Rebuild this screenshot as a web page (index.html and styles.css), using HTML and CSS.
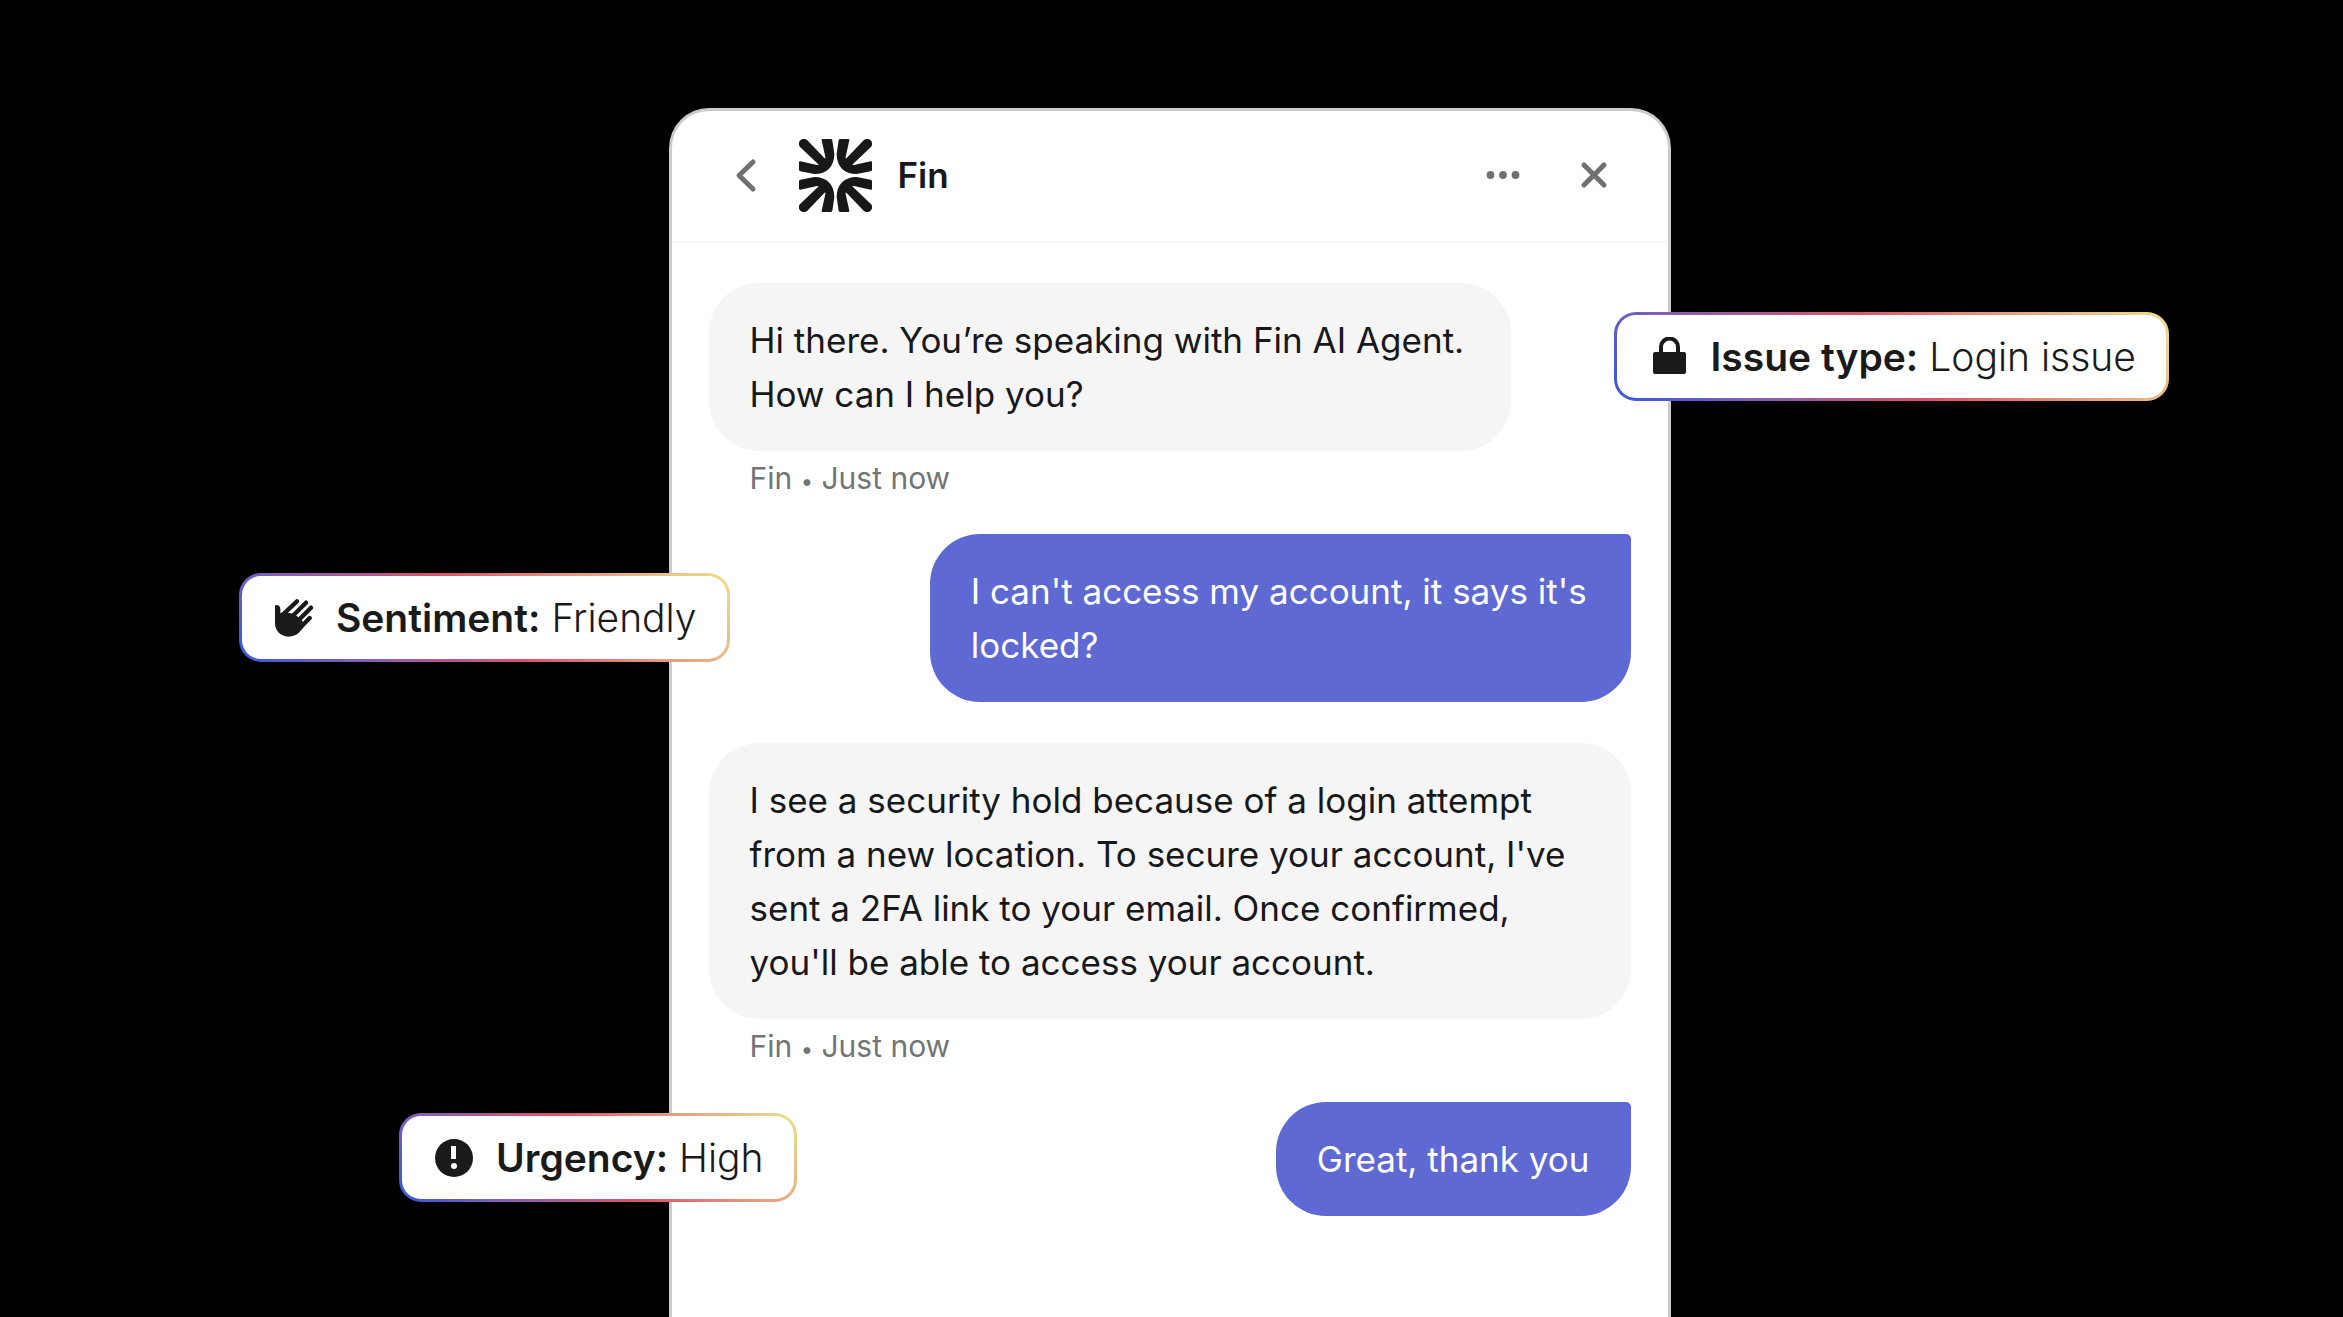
FILE: index.html
```html
<!DOCTYPE html>
<html lang="en">
<head>
    <meta charset="UTF-8">
    <meta name="viewport" content="width=device-width, initial-scale=1.0">
    <title>Fin AI Agent</title>
    <link rel="stylesheet" href="styles.css">
</head>
<body>

    <main class="messenger">
        <header class="messenger-header">
            <button class="icon-button" type="button" aria-label="Back">
                <svg viewBox="0 0 40 40"><path d="M27 7 L13 20.500 L27 34" /></svg>
            </button>
            <svg class="logo" viewBox="0 0 219 219" aria-hidden="true">
                <defs>
                    <path id="ray" d="M72 0 H95 Q99 0 100 4 L106 44 C106 82 84 105 46 105 L4 97 Q0 96 0 92 V70 Q0 66 4 67 L54 78 Q61 79 57 75 L4 25 A14.500 14.500 0 0 1 25 4 L76 57 Q80 61 79 54 L68 4 Q67 0 72 0 Z" />
                </defs>
                <use href="#ray" />
                <use href="#ray" transform="translate(219 0) scale(-1 1)" />
                <use href="#ray" transform="translate(0 219) scale(1 -1)" />
                <use href="#ray" transform="translate(219 219) scale(-1 -1)" />
            </svg>
            <h1 class="title">Fin</h1>
            <div class="header-actions">
                <button class="icon-button" type="button" aria-label="More options">
                    <svg class="dots" viewBox="0 0 40 40"><circle cx="7.500" cy="20" r="3.900" /><circle cx="20" cy="20" r="3.900" /><circle cx="32.500" cy="20" r="3.900" /></svg>
                </button>
                <button class="icon-button" type="button" aria-label="Close">
                    <svg viewBox="0 0 40 40"><path d="M10 10 L30 30 M30 10 L10 30" /></svg>
                </button>
            </div>
        </header>

        <section class="conversation">
            <div class="message">
                <p class="bubble bubble-short">Hi there. You’re speaking with Fin AI Agent. How can I help you?</p>
                <p class="meta">Fin <span class="separator">•</span> Just now</p>
            </div>
            <div class="message message-user">
                <p class="bubble">I can't access my account, it says it's locked?</p>
            </div>
            <div class="message">
                <p class="bubble">I see a security hold because of a login attempt from a new location. To secure your account, I've sent a 2FA link to your email. Once confirmed, you'll be able to access your account.</p>
                <p class="meta">Fin <span class="separator">•</span> Just now</p>
            </div>
            <div class="message message-user">
                <p class="bubble">Great, thank you</p>
            </div>
        </section>

        <!-- Attribute tags floating over the messenger -->
        <div class="tag tag-issue">
            <svg class="tag-icon" viewBox="0 0 40 40" aria-hidden="true">
                <path d="M12 16 V10 a8.500 8.500 0 0 1 17 0 V16" fill="none" stroke="currentColor" stroke-width="4" />
                <rect x="4" y="15" width="33" height="22" rx="2" />
            </svg>
            <span><strong>Issue type:</strong> Login issue</span>
        </div>
        <div class="tag tag-sentiment">
            <svg class="tag-icon" viewBox="0 0 120 120" aria-hidden="true">
                <path d="M3 24 Q4 20 10 21 Q19 23 19 34 V46 L30 42 L60 48 L82 64 L92 82 L76 103 Q62 116 44 116 C20 116 3 98 3 76 Z" />
                <path d="M69 10 L24 52 M96 14 L50 60 M111 29 L66 74 M107 60 L78 90" fill="none" stroke="currentColor" stroke-width="13" stroke-linecap="round" />
            </svg>
            <span><strong>Sentiment:</strong> Friendly</span>
        </div>
        <div class="tag tag-urgency">
            <svg class="tag-icon" viewBox="0 0 40 40" aria-hidden="true">
                <circle cx="20" cy="20" r="19" />
                <path d="M17 8 H22 V21 H17 Z" fill="#fff" />
                <circle cx="20" cy="28" r="3" fill="#fff" />
            </svg>
            <span><strong>Urgency:</strong> High</span>
        </div>
    </main>

</body>
</html>
```
FILE: styles.css
```css
* {
    box-sizing: border-box;
}

body {
    margin: 0;
    padding: 108px 4px 0 0;
    min-height: 100vh;
    display: flex;
    justify-content: center;
    background-color: #000;
    color: #17181a;
    font-family: Inter, "Liberation Sans", sans-serif;
}

.messenger {
    position: relative;
    width: 100%;
    max-width: 1002px;
    background-color: #fff;
    border: 3px solid #cbcbcb;
    border-bottom: none;
    border-radius: 40px 40px 0 0;
}

/* Header */
.messenger-header {
    display: flex;
    align-items: center;
    height: 132px;
    padding: 0 54px 2px;
    border-bottom: 2px solid #f5f5f5;
}

.icon-button {
    width: 40px;
    height: 40px;
    padding: 0;
    border: none;
    background: none;
    color: #6f7072;
    cursor: pointer;
}

.icon-button svg {
    display: block;
    width: 100%;
    height: 100%;
    fill: none;
    stroke: currentColor;
    stroke-width: 5;
    stroke-linecap: round;
    stroke-linejoin: round;
}

.icon-button .dots {
    fill: currentColor;
    stroke: none;
}

.logo {
    width: 73px;
    height: 73px;
    margin-left: 33px;
    fill: #17181a;
}

.title {
    margin: 0 0 0 26px;
    font-size: 35px;
    font-weight: 600;
}

.header-actions {
    display: flex;
    gap: 51px;
    margin-left: auto;
}

/* Conversation */
.conversation {
    display: flex;
    flex-direction: column;
    gap: 41px;
    padding: 40px 37px;
}

.message {
    display: flex;
    flex-direction: column;
    align-items: flex-start;
}

.message-user {
    align-items: flex-end;
}

.bubble {
    margin: 0;
    padding: 30px 41px;
    border-radius: 50px;
    background-color: #f5f5f5;
    font-size: 35px;
    line-height: 54px;
}

.bubble-short {
    max-width: 87%;
}

.message-user .bubble {
    max-width: 76%;
    border-top-right-radius: 5px;
    background-color: #5e69d3;
    color: #fff;
}

.meta {
    margin: 0;
    padding: 12px 41px 0;
    color: #737476;
    font-size: 30px;
    line-height: 30px;
}

.separator {
    font-size: 22px;
    line-height: 1;
}

/* Tags */
.tag {
    position: absolute;
    display: flex;
    align-items: center;
    gap: 22px;
    height: 89px;
    padding: 0 30px 0 32px;
    border: 3px solid transparent;
    border-radius: 22px;
    background:
        linear-gradient(#fff, #fff) padding-box,
        linear-gradient(45deg, #4459d8 4%, #8560b4 22%, #d9546b 50%, #e3a083 75%, #ead88c 97%) border-box;
    color: #1a1a1a;
    font-size: 39px;
    font-weight: 300;
    white-space: nowrap;
}

.tag strong {
    font-weight: 600;
}

.tag-icon {
    flex: none;
    width: 40px;
    height: 40px;
    fill: currentColor;
}

.tag-issue {
    top: 201px;
    left: calc(100% - 54px);
}

.tag-sentiment {
    top: 462px;
    right: calc(100% - 58px);
}

.tag-urgency {
    top: 1002px;
    right: calc(100% - 125px);
}

/* Keep the tags inside the window when there is no room beside the panel */
@media (max-width: 1500px) {
    .tag-issue {
        left: auto;
        right: 16px;
    }

    .tag-sentiment,
    .tag-urgency {
        right: auto;
        left: 16px;
    }
}
```
